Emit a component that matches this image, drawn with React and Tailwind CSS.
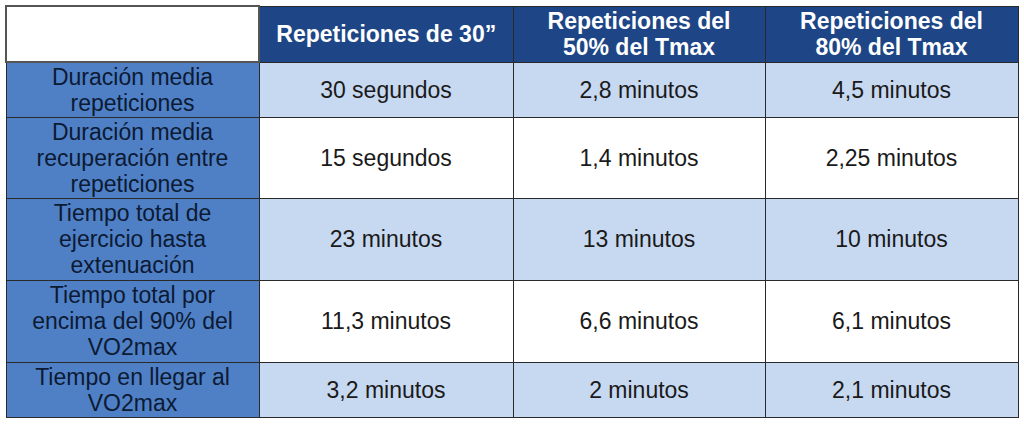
import React from 'react';

const HEADERS = ['Repeticiones de 30”', 'Repeticiones del 50% del Tmax', 'Repeticiones del 80% del Tmax'];

const ROWS = [
    { label: ['Duración media', 'repeticiones'], values: ['30 segundos', '2,8 minutos', '4,5 minutos'], h: 'h-[55px]', light: true },
    { label: ['Duración media', 'recuperación entre', 'repeticiones'], values: ['15 segundos', '1,4 minutos', '2,25 minutos'], h: 'h-[81px]', light: false },
    { label: ['Tiempo total de', 'ejercicio hasta', 'extenuación'], values: ['23 minutos', '13 minutos', '10 minutos'], h: 'h-[82px]', light: true },
    { label: ['Tiempo total por', 'encima del 90% del', 'VO2max'], values: ['11,3 minutos', '6,6 minutos', '6,1 minutos'], h: 'h-[82px]', light: false },
    { label: ['Tiempo en llegar al', 'VO2max'], values: ['3,2 minutos', '2 minutos', '2,1 minutos'], h: 'h-[55px]', light: true },
];

export default function App() {
    return (
        <div className="w-[1024px] h-[424px] bg-white pt-[5px] pl-[5px] font-['Liberation_Sans',Arial,sans-serif]">
            <table className="table-fixed border-collapse w-[1012px] text-[23px] leading-[26px]">
                <colgroup>
                    <col className="w-[253px]" />
                    <col className="w-[254px]" />
                    <col className="w-[252px]" />
                    <col className="w-[253px]" />
                </colgroup>
                <thead>
                    <tr className="h-[56px]">
                        <th className="border-2 border-[#555555] bg-white" />
                        {HEADERS.map((h, i) => (
                            <th
                                key={h}
                                className="border-[1.5px] border-[#2a2a2a] bg-[#1e4686] text-white font-bold text-center px-1"
                            >
                                {i === 0 ? h : (
                                    <>
                                        <div>Repeticiones del</div>
                                        <div>{i === 1 ? '50%' : '80%'} del Tmax</div>
                                    </>
                                )}
                            </th>
                        ))}
                    </tr>
                </thead>
                <tbody>
                    {ROWS.map((r) => (
                        <tr key={r.values[0]} className={r.h}>
                            <td className="border-[1.5px] border-[#2a2a2a] bg-[#4f80c6] text-[#0c1a33] text-center whitespace-nowrap">
                                {r.label.map((l) => (
                                    <div key={l}>{l}</div>
                                ))}
                            </td>
                            {r.values.map((v) => (
                                <td
                                    key={v}
                                    className={`border-[1.5px] border-[#2a2a2a] text-[#1a1a1a] text-center ${r.light ? 'bg-[#c7d8f1]' : 'bg-white'}`}
                                >
                                    {v}
                                </td>
                            ))}
                        </tr>
                    ))}
                </tbody>
            </table>
        </div>
    );
}
